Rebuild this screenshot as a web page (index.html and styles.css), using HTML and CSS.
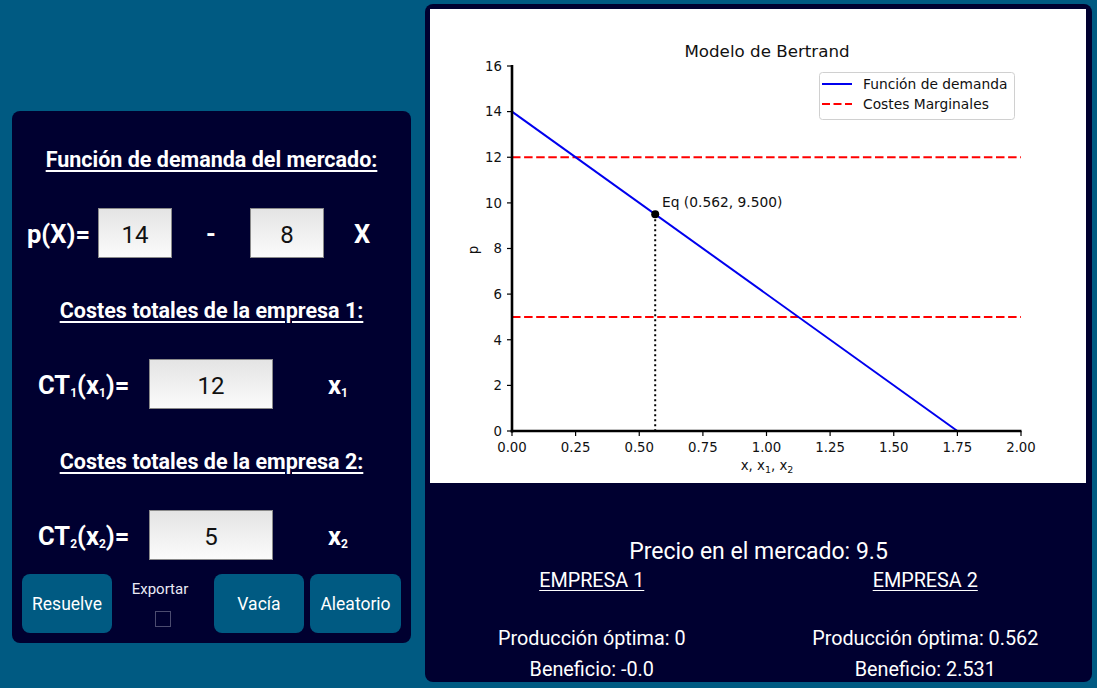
FILE: index.html
```html
<!DOCTYPE html>
<html lang="es">
<head>
<meta charset="utf-8">
<title>Modelo de Bertrand</title>
<link rel="stylesheet" href="styles.css">
</head>
<body>
<div class="app">
  <section class="left-panel">
    <h2 class="heading h-first">Función de demanda del mercado:</h2>
    <div class="row row-demand">
      <span class="lbl lbl-p">p(X)=</span>
      <div class="field f-small">14</div>
      <span class="minus">-</span>
      <div class="field f-small">8</div>
      <span class="lbl lbl-x">X</span>
    </div>
    <h2 class="heading">Costes totales de la empresa 1:</h2>
    <div class="row row-cost">
      <span class="lbl lbl-ct">CT<sub>1</sub>(x<sub>1</sub>)=</span>
      <div class="field f-wide">12</div>
      <span class="lbl lbl-xi">x<sub>1</sub></span>
    </div>
    <h2 class="heading">Costes totales de la empresa 2:</h2>
    <div class="row row-cost">
      <span class="lbl lbl-ct">CT<sub>2</sub>(x<sub>2</sub>)=</span>
      <div class="field f-wide">5</div>
      <span class="lbl lbl-xi">x<sub>2</sub></span>
    </div>
    <div class="buttons">
      <button class="btn btn-solve">Resuelve</button>
      <div class="export">
        <span class="export-label">Exportar</span>
        <span class="checkbox"></span>
      </div>
      <button class="btn btn-empty">Vacía</button>
      <button class="btn btn-random">Aleatorio</button>
    </div>
  </section>

  <section class="right-panel">
    <div class="chart">
      <svg class="plot" width="656" height="474" viewBox="0 0 656 474" xmlns="http://www.w3.org/2000/svg">
        <text class="title" x="337" y="48" text-anchor="middle">Modelo de Bertrand</text>
        <!-- cost lines -->
        <line x1="82" y1="148.25" x2="591" y2="148.25" stroke="#ff0000" stroke-width="2" stroke-dasharray="8.5 3.6"/>
        <line x1="82" y1="308" x2="591" y2="308" stroke="#ff0000" stroke-width="2" stroke-dasharray="8.5 3.6"/>
        <!-- demand -->
        <line x1="82" y1="102.6" x2="527.4" y2="422" stroke="#0000ee" stroke-width="2"/>
        <!-- equilibrium -->
        <line x1="225.2" y1="205.3" x2="225.2" y2="422" stroke="#000" stroke-width="2" stroke-dasharray="2 3"/>
        <circle cx="225.2" cy="205.3" r="4" fill="#000"/>
        <text class="annot" x="232" y="198">Eq (0.562, 9.500)</text>
        <!-- spines -->
        <line x1="82" y1="56" x2="82" y2="423.5" stroke="#000" stroke-width="2.6"/>
        <line x1="80.7" y1="422" x2="591.5" y2="422" stroke="#000" stroke-width="2.6"/>
        <!-- y ticks -->
        <g stroke="#000" stroke-width="1.2">
          <line x1="77" y1="422" x2="82" y2="422"/>
          <line x1="77" y1="376.4" x2="82" y2="376.4"/>
          <line x1="77" y1="330.75" x2="82" y2="330.75"/>
          <line x1="77" y1="285.1" x2="82" y2="285.1"/>
          <line x1="77" y1="239.5" x2="82" y2="239.5"/>
          <line x1="77" y1="193.9" x2="82" y2="193.9"/>
          <line x1="77" y1="148.25" x2="82" y2="148.25"/>
          <line x1="77" y1="102.6" x2="82" y2="102.6"/>
          <line x1="77" y1="57" x2="82" y2="57"/>
        </g>
        <g class="tick" text-anchor="end">
          <text x="72" y="426.8">0</text>
          <text x="72" y="381.2">2</text>
          <text x="72" y="335.5">4</text>
          <text x="72" y="289.9">6</text>
          <text x="72" y="244.3">8</text>
          <text x="72" y="198.7">10</text>
          <text x="72" y="153">12</text>
          <text x="72" y="107.4">14</text>
          <text x="72" y="61.8">16</text>
        </g>
        <!-- x ticks -->
        <g stroke="#000" stroke-width="1.2">
          <line x1="82" y1="422" x2="82" y2="427"/>
          <line x1="145.6" y1="422" x2="145.6" y2="427"/>
          <line x1="209.25" y1="422" x2="209.25" y2="427"/>
          <line x1="272.9" y1="422" x2="272.9" y2="427"/>
          <line x1="336.5" y1="422" x2="336.5" y2="427"/>
          <line x1="400.1" y1="422" x2="400.1" y2="427"/>
          <line x1="463.75" y1="422" x2="463.75" y2="427"/>
          <line x1="527.4" y1="422" x2="527.4" y2="427"/>
          <line x1="591" y1="422" x2="591" y2="427"/>
        </g>
        <g class="tick" text-anchor="middle">
          <text x="82" y="443">0.00</text>
          <text x="145.6" y="443">0.25</text>
          <text x="209.25" y="443">0.50</text>
          <text x="272.9" y="443">0.75</text>
          <text x="336.5" y="443">1.00</text>
          <text x="400.1" y="443">1.25</text>
          <text x="463.75" y="443">1.50</text>
          <text x="527.4" y="443">1.75</text>
          <text x="591" y="443">2.00</text>
        </g>
        <text class="tick" x="337" y="461" text-anchor="middle">x, x<tspan class="sub" dy="3">1</tspan><tspan dy="-3">, x</tspan><tspan class="sub" dy="3">2</tspan></text>
        <text class="tick" x="0" y="0" text-anchor="middle" transform="translate(48 241) rotate(-90)">p</text>
        <!-- legend -->
        <rect x="389.5" y="63.5" width="195" height="47" rx="3" fill="#fff" fill-opacity="0.8" stroke="#d0d0d0"/>
        <line x1="392" y1="75" x2="422" y2="75" stroke="#0000ee" stroke-width="2"/>
        <line x1="392" y1="95" x2="422" y2="95" stroke="#ff0000" stroke-width="2" stroke-dasharray="8 3.5"/>
        <text class="annot" x="433" y="80">Función de demanda</text>
        <text class="annot" x="433" y="100">Costes Marginales</text>
      </svg>
    </div>
    <div class="results">
      <p class="price">Precio en el mercado: 9.5</p>
      <div class="cols">
        <div class="col">
          <p class="firm">EMPRESA 1</p>
          <p class="val v-first">Producción óptima: 0</p>
          <p class="val">Beneficio: -0.0</p>
        </div>
        <div class="col">
          <p class="firm">EMPRESA 2</p>
          <p class="val v-first">Producción óptima: 0.562</p>
          <p class="val">Beneficio: 2.531</p>
        </div>
      </div>
    </div>
  </section>
</div>
</body>
</html>
```

FILE: styles.css
```css
* { box-sizing: border-box; }

html, body {
  margin: 0;
  padding: 0;
}

body {
  width: 1097px;
  height: 688px;
  overflow: hidden;
  background: #005a82;
  font-family: Roboto, "Noto Sans", sans-serif;
  color: #fff;
}

.app {
  display: flex;
  align-items: flex-start;
  padding: 4px 0 0 12px;
  gap: 14px;
}

/* ---------- left panel ---------- */
.left-panel {
  margin-top: 107px;
  width: 399px;
  height: 532px;
  background: #000030;
  border-radius: 8px;
  display: flex;
  flex-direction: column;
}

.heading {
  margin: 39px 0 0;
  height: 28px;
  line-height: 28px;
  font-size: 21.5px;
  font-weight: 700;
  text-align: center;
  text-decoration: underline;
  text-underline-offset: 3px;
  text-decoration-thickness: 1.5px;
}

.heading.h-first { margin-top: 35px; }

.row {
  margin-top: 34px;
  height: 50px;
  display: flex;
  align-items: center;
}

.lbl {
  font-weight: 700;
  font-size: 25.5px;
  white-space: nowrap;
  padding-top: 2px;
}

.lbl sub {
  font-size: 12px;
  vertical-align: -3px;
}

.field {
  height: 50px;
  background: linear-gradient(#e4e4e4, #fbfbfb);
  border: 1px solid #8a8a8a;
  color: #111;
  font-size: 24px;
  padding-top: 4px;
  display: flex;
  align-items: center;
  justify-content: center;
}

.f-small { width: 74px; }
.f-wide { width: 124px; }

.row-demand { padding-left: 15px; }
.lbl-p { width: 71px; }
.minus {
  width: 78px;
  text-align: center;
  font-size: 25px;
  font-weight: 700;
  padding-top: 2px;
}
.lbl-x { margin-left: 30px; }

.row-cost { padding-left: 26px; }
.lbl-ct { width: 111px; }
.lbl-xi { margin-left: 55px; }

.buttons {
  margin-top: 14px;
  padding-left: 10px;
  height: 59px;
  display: flex;
  align-items: stretch;
}

.btn {
  width: 90px;
  border: none;
  border-radius: 8px;
  background: #005a82;
  color: #fff;
  font-family: Roboto, "Noto Sans", sans-serif;
  font-size: 17.5px;
  padding: 0;
}

.btn-random { width: 91px; margin-left: 6px; }

.export {
  width: 96px;
  margin-right: 6px;
  display: flex;
  flex-direction: column;
  align-items: center;
  padding-top: 5px;
}

.export-label {
  font-size: 15px;
  line-height: 20px;
  color: #eaeaf5;
}

.checkbox {
  margin-top: 12px;
  margin-left: 6px;
  width: 16px;
  height: 16px;
  border: 1px solid #4c4c70;
}

/* ---------- right panel ---------- */
.right-panel {
  width: 667px;
  height: 678px;
  background: #000030;
  border-radius: 8px;
  padding-top: 5px;
}

.chart {
  margin-left: 5px;
  width: 656px;
  height: 474px;
  background: #fff;
}

.plot { display: block; }

.plot text {
  font-family: "DejaVu Sans", sans-serif;
  fill: #111;
}

.plot .title { font-size: 16.7px; }
.plot .tick { font-size: 13.3px; }
.plot .annot { font-size: 13.8px; }
.plot .sub { font-size: 9.5px; }

.results {
  text-align: center;
}

.results p { margin: 0; }

.price {
  margin-top: 54px !important;
  font-size: 23px;
  line-height: 30px;
}

.cols {
  display: flex;
  margin-top: 2px;
}

.col { flex: 1; }

.firm {
  font-size: 19.8px;
  line-height: 24px;
  text-decoration: underline;
  text-underline-offset: 3px;
}

.val {
  font-size: 19.8px;
  line-height: 28px;
  margin-top: 3px !important;
}

.val.v-first { margin-top: 32px !important; }
```
